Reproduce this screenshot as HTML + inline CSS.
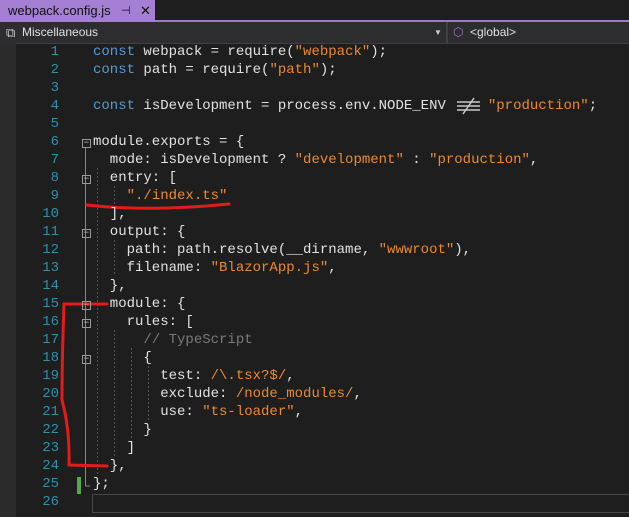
<!DOCTYPE html>
<html><head><meta charset="utf-8"><style>
body{margin:0;width:629px;height:517px;background:#1e1e1e;overflow:hidden;position:relative;font-family:"Liberation Mono",monospace}
.tabbar{position:absolute;left:0;top:0;width:629px;height:20px;background:#1e1e1e;border-bottom:2px solid #9a7bc9}
.tab{position:absolute;left:0;top:0;width:155px;height:22px;background:#a47fd3;color:#111;font:13px "Liberation Sans",sans-serif;line-height:22px}
.tool{position:absolute;left:0;top:22px;width:629px;height:21px;background:#2d2d30;border-bottom:1px solid #3f3f46;color:#e0e0e0;font:12px "Liberation Sans",sans-serif;line-height:21px}
.gut{position:absolute;left:0;top:43px;width:16px;height:474px;background:#2b2b2b}
.ln{position:absolute;left:20px;width:39px;text-align:right;color:#2b91af;font-size:14px;line-height:18px}
.cd{position:absolute;left:93px;color:#e2e2e2;font-size:14px;line-height:18px;white-space:pre}
.k{color:#569cd6}.s{color:#ee8a2a}.c{color:#7a7a7a}.o{display:inline-block;width:25.2px}
.fold{position:absolute;left:82px;width:7px;height:7px;border:1px solid #999;font-size:9px;line-height:6px;color:#ccc;text-align:center}
</style></head><body>
<div class="tabbar"></div>
<div class="tab"><span style="margin-left:8px">webpack.config.js</span><span style="position:absolute;left:121px;font-size:11px">⊣</span><span style="position:absolute;left:140px">✕</span></div>
<div class="tool">
<span style="position:absolute;left:6px;top:0;font-size:13px;color:#ccc">⧉</span><span style="position:absolute;left:22px">Miscellaneous</span>
<span style="position:absolute;left:434px;font-size:8px;color:#ccc">▼</span>
<div style="position:absolute;left:446px;top:0;width:2px;height:21px;background:#3f3f46"></div>
<span style="position:absolute;left:453px;color:#9a7bc9">⬡</span><span style="position:absolute;left:470px">&lt;global&gt;</span>
</div>
<div class="gut"></div>
<div style="position:absolute;left:92px;top:494px;width:537px;height:17px;border:1px solid #464646"></div>
<div style="position:absolute;left:77px;top:477px;width:4px;height:17px;background:#57a64a"></div>
<svg style="position:absolute;left:0;top:0" width="629" height="517">
<g stroke="#888" stroke-width="1" fill="none">
<line x1="85.5" y1="147" x2="85.5" y2="486"/><line x1="85.5" y1="486" x2="90" y2="486"/>
</g>
<g stroke="#555" stroke-dasharray="2,2">
<line x1="97.5" y1="168" x2="97.5" y2="475"/>
<line x1="114.5" y1="186" x2="114.5" y2="204"/>
<line x1="114.5" y1="240" x2="114.5" y2="276"/>
<line x1="114.5" y1="330" x2="114.5" y2="456"/>
<line x1="131.5" y1="348" x2="131.5" y2="438"/>
<line x1="148.5" y1="366" x2="148.5" y2="420"/>
</g>
<g stroke="#c8c8c8" stroke-width="1.5" fill="none">
<line x1="457" y1="102" x2="480" y2="102"/>
<line x1="457" y1="106" x2="480" y2="106"/>
<line x1="457" y1="110" x2="480" y2="110"/>
<line x1="463" y1="114" x2="474" y2="98"/>
</g>
<g stroke="#e51a1a" stroke-width="3" fill="none" stroke-linecap="round">
<path d="M87 205 Q 150 212 229 204"/>
<path d="M107 304 L64 304 Q62 360 62 400 Q70 430 69 465 L107 466"/>
</g>
</svg>
<div class="fold" style="top:139px">−</div>
<div class="fold" style="top:175px">−</div>
<div class="fold" style="top:229px">−</div>
<div class="fold" style="top:301px">−</div>
<div class="fold" style="top:319px">−</div>
<div class="fold" style="top:355px">−</div>
<div class="ln" style="top:43px">1<br>2<br>3<br>4<br>5<br>6<br>7<br>8<br>9<br>10<br>11<br>12<br>13<br>14<br>15<br>16<br>17<br>18<br>19<br>20<br>21<br>22<br>23<br>24<br>25<br>26</div>
<div class="cd" style="top:43px"><span class="k">const</span> webpack = require(<span class="s">"webpack"</span>);
<span class="k">const</span> path = require(<span class="s">"path"</span>);

<span class="k">const</span> isDevelopment = process.env.NODE_ENV <span class="o"></span> <span class="s">"production"</span>;

module.exports = {
  mode: isDevelopment ? <span class="s">"development"</span> : <span class="s">"production"</span>,
  entry: [
    <span class="s">"./index.ts"</span>
  ],
  output: {
    path: path.resolve(__dirname, <span class="s">"wwwroot"</span>),
    filename: <span class="s">"BlazorApp.js"</span>,
  },
  module: {
    rules: [
      <span class="c">// TypeScript</span>
      {
        test: <span class="s">/\.tsx?$/</span>,
        exclude: <span class="s">/node_modules/</span>,
        use: <span class="s">"ts-loader"</span>,
      }
    ]
  },
};
</div>
</body></html>
